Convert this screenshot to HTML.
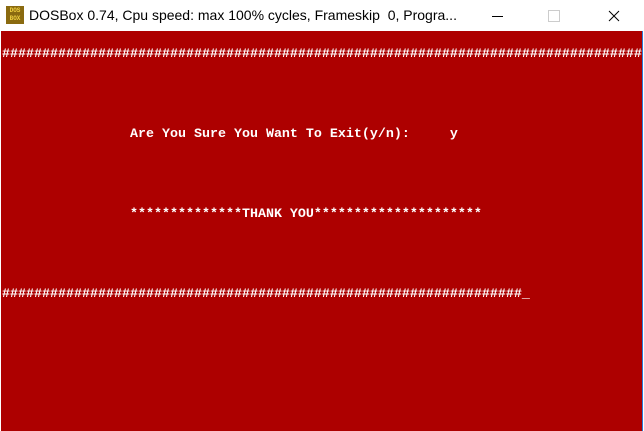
<!DOCTYPE html><html><head><style>
body{margin:0;width:644px;height:431px;overflow:hidden;background:#fff;position:relative;font-family:"Liberation Sans",sans-serif}
.tb{position:absolute;left:0;top:0;width:644px;height:31px;background:#fff}
.ic{position:absolute;left:6px;top:6px;width:18px;height:18px;background:#8a6a10;color:#f0d040;font:bold 6px/8px "Liberation Mono",monospace;text-align:center;padding-top:1px;box-sizing:border-box}
.tt{position:absolute;left:29px;top:7px;font-size:14px;color:#000;white-space:nowrap}
.scr{position:absolute;left:1px;top:31px;width:642px;height:400px;background:#ad0000;border-right:1px solid #2b7bd6;box-sizing:border-box}
.ln{position:absolute;left:1px;font:bold 13.33px/16px "Liberation Mono",monospace;color:#fff;white-space:pre;height:16px}
</style></head><body>
<div class="tb">
<div class="ic">DOS<br>BOX</div>
<div class="tt">DOSBox 0.74, Cpu speed: max 100% cycles, Frameskip&nbsp; 0, Progra...</div>
<div style="position:absolute;left:492px;top:16px;width:11px;height:1px;background:#000"></div>
<div style="position:absolute;left:548px;top:10px;width:10px;height:10px;border:1px solid #ccc"></div>
<svg style="position:absolute;left:608px;top:10px" width="12" height="12"><path d="M1 1L11 11M11 1L1 11" stroke="#000" stroke-width="1"/></svg>
</div>
<div class="scr">
<div class="ln" style="top:16px">################################################################################</div>
<div class="ln" style="top:96px">                Are You Sure You Want To Exit(y/n):     y</div>
<div class="ln" style="top:176px">                **************THANK YOU*********************</div>
<div class="ln" style="top:256px">#################################################################_</div>
</div>
</body></html>
